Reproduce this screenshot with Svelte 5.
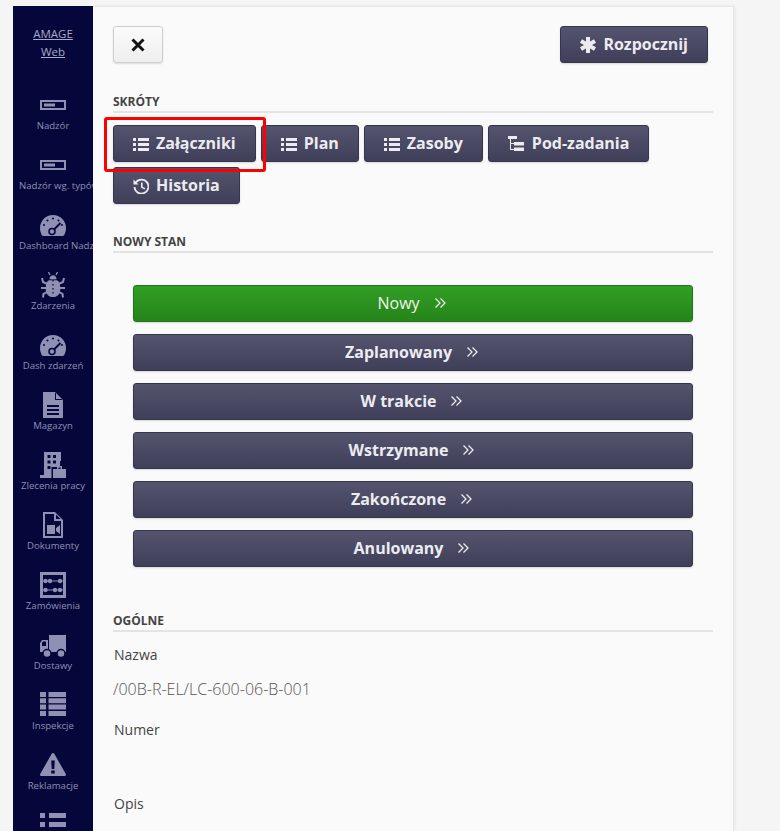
<script>
	let menu = [
		{ label: 'Nadzór', icon: drive },
		{ label: 'Nadzór wg. typów', icon: drive },
		{ label: 'Dashboard Nadzór', icon: gauge },
		{ label: 'Zdarzenia', icon: bug },
		{ label: 'Dash zdarzeń', icon: gauge },
		{ label: 'Magazyn', icon: doc },
		{ label: 'Zlecenia pracy', icon: building },
		{ label: 'Dokumenty', icon: video },
		{ label: 'Zamówienia', icon: abacus },
		{ label: 'Dostawy', icon: truck },
		{ label: 'Inspekcje', icon: table },
		{ label: 'Reklamacje', icon: warning },
		{ label: '', icon: rows }
	];

	let shortcuts = [
		{ label: 'Załączniki', icon: list, size: 16 },
		{ label: 'Plan', icon: list, size: 16 },
		{ label: 'Zasoby', icon: list, size: 16 },
		{ label: 'Pod-zadania', icon: tree, size: 17 },
		{ label: 'Historia', icon: history, size: 16 }
	];

	let states = ['Zaplanowany', 'W trakcie', 'Wstrzymane', 'Zakończone', 'Anulowany'];
</script>

{#snippet drive()}
	<path fill-rule="evenodd" d="M0 8h26v10H0zM2 10v6h22v-6zM4 11.500h11v3H4z" />
{/snippet}

{#snippet gauge()}
	<path d="M13 3C5.800 3 0 8.800 0 16c0 2.600.7 5 1.900 7.200.3.500.8.800 1.300.8h19.600c.5 0 1-.3 1.300-.8C25.300 21 26 18.600 26 16 26 8.800 20.200 3 13 3z" />
	<circle class="cut" cx="13" cy="6.500" r="1" /><circle class="cut" cx="7.500" cy="8.500" r="1" />
	<circle class="cut" cx="4" cy="13" r="1" /><circle class="cut" cx="22" cy="13" r="1" />
	<circle class="cut" cx="18.500" cy="8.500" r="1" />
	<path class="cut-line" d="M13 18.500l7.500-7.500" />
	<circle class="hub" cx="12" cy="19.500" r="3" />
{/snippet}

{#snippet bug()}
	<path d="M7 10c2-4 10-4 12 0 1.500 3 1.500 7 1 9.500-.5 3.500-3.500 5.500-7 5.500s-6.500-2-7-5.500c-.5-2.500-.5-6.500 1-9.500z" />
	<path class="line" d="M7.500 12 3 10 2 6M18.500 12l4.500-2 1-4M6 16H1M20 16h5M7 20l-3.500 2-.5 3.500M19 20l3.500 2 .5 3.500" />
	<path class="line thin" d="M10 3 8.500 0M16 3l1.500-3" />
	<path d="M9.500 7c0-5 7-5 7 0z" />
	<path class="cut" d="M12.400 8h1.200v1.600h-1.200zM12.400 12h1.200v1.600h-1.200zM12.400 16h1.200v1.600h-1.200zM12.400 20h1.200v1.600h-1.200zM6 7.600h14v.7H6z" />
{/snippet}

{#snippet doc()}
	<path fill-rule="evenodd" d="M3 0h12l8 8v18H3zM7 13v2h12v-2zM7 17v2h12v-2zM7 21v2h12v-2z" />
	<path class="cut" d="M15 0.500v7.500h7.500l-1-1H16V1.500z" />
{/snippet}

{#snippet building()}
	<path fill-rule="evenodd" d="M4 0h17v9h-1v6h-7v11H0v-3h4zM7.500 3v3h3V3zM13 3v3h3V3zM7.500 8.500v3h3v-3zM13 8.500v3h3v-3zM7.500 14v3h3v-3z" />
	<path class="cut" d="M11.500 15h14.500v11H11.500z" />
	<path fill-rule="evenodd" d="M13 17h4v-3h5v3h4v9H13zM18.500 15.500V17h2v-1.500z" />
{/snippet}

{#snippet video()}
	<path fill-rule="evenodd" d="M3 0h12l8 8v18H3zM5 2v22h16V9h-7V2zM16 2.500V7h4.500z" />
	<path d="M7 13h8v9H7zM16 16l4-3v9l-4-3z" />
{/snippet}

{#snippet abacus()}
	<path fill-rule="evenodd" d="M0 0h26v26H0zM3 3v20h20V3z" />
	<path d="M3 8.500h20v1H3zM3 17.500h20v1H3z" />
	<circle cx="5.500" cy="9" r="2.200" /><circle cx="10" cy="9" r="2.200" /><circle cx="20" cy="9" r="2.200" />
	<circle cx="5.500" cy="18" r="2.200" /><circle cx="15" cy="18" r="2.200" /><circle cx="20" cy="18" r="2.200" />
{/snippet}

{#snippet truck()}
	<path fill-rule="evenodd" d="M9 3h17v15H9zM0 11l2-3h6v10H0zM2 10.500V14h4V9.500H3z" />
	<path d="M0 18h26v2H0z" />
	<circle class="hub" cx="7" cy="21.500" r="4" />
	<circle class="hub" cx="21" cy="21.500" r="4" />
{/snippet}

{#snippet table()}
	<path d="M0 0h6v5H0zM8.500 0H26v5H8.500zM0 6.300h6v5H0zM8.500 6.300H26v5H8.500zM0 12.600h6v5H0zM8.500 12.600H26v5H8.500zM0 18.900h6v5H0zM8.500 18.900H26v5H8.500z" />
{/snippet}

{#snippet warning()}
	<path fill-rule="evenodd" d="M13 1c.6 0 1 .3 1.300.8L25.800 22c.5 1-.2 2-1.300 2H1.500C.4 24-.3 23 .2 22L11.700 1.800C12 1.300 12.400 1 13 1zM11.200 8.500l.5 8.500h2.600l.5-8.500zM11.300 18.500v3h3.400v-3z" />
{/snippet}

{#snippet rows()}
	<path d="M0 1h5v5H0zM9 1h17v5H9zM0 10h5v5H0zM9 10h17v5H9zM0 19h5v5H0zM9 19h17v5H9z" />
{/snippet}

{#snippet list()}
	<path d="M0 2h3v3H0zM5 2h11v3H5zM0 7h3v3H0zM5 7h11v3H5zM0 12h3v3H0zM5 12h11v3H5z" />
{/snippet}

{#snippet tree()}
	<path d="M0 0h9v3H0zM6 6h10v3.500H6zM6 11.500h10V15H6z" />
	<path d="M2 3h1v10h3v1H2zM3 7h3v1H3z" />
{/snippet}

{#snippet history()}
	<path class="stroke" d="M2.800 4.500A7 7 0 1 1 1.500 9" />
	<path d="M.5 1.500 5.500 6.500H.5z" />
	<path d="M8 4.500h1.600v4.200l2.700 1.600-.8 1.300L8 9.600z" />
{/snippet}

{#snippet chevrons()}
	<svg class="chevrons" viewBox="0 0 12 12" width="12" height="12">
		<path d="M1.500 1.500 6 6l-4.500 4.500M6.500 1.500 11 6l-4.500 4.500" />
	</svg>
{/snippet}

<div class="page">
	<nav class="sidebar">
		<a class="brand" href="#top">AMAGE<br />Web</a>
		{#each menu as item}
			<div class="item">
				<svg viewBox="0 0 26 26" width="26" height="26">{@render item.icon()}</svg>
				{#if item.label}
					<span>{item.label}</span>
				{/if}
			</div>
		{/each}
	</nav>

	<main class="panel">
		<div class="top">
			<button class="close" aria-label="Zamknij">
				<svg viewBox="0 0 16 16" width="16" height="16">
					<path d="M2.500 2.500l11 11M13.500 2.500l-11 11" />
				</svg>
			</button>
			<button class="btn">
				<svg class="ico" viewBox="0 0 16 16" width="16" height="16">
					<path class="stroke thick" d="M8 0v16M1 4l14 8M15 4 1 12" />
				</svg>
				Rozpocznij
			</button>
		</div>

		<h3 class="first">Skróty</h3>
		<div class="shortcuts">
			{#each shortcuts as s, i}
				<button class="btn" class:marked={i === 0}>
					<svg class="ico" viewBox="0 0 {s.size} 16" width={s.size} height="16">{@render s.icon()}</svg>
					{s.label}
				</button>
			{/each}
		</div>

		<h3 class="second">Nowy stan</h3>
		<div class="states">
			<button class="btn wide green">Nowy {@render chevrons()}</button>
			{#each states as s}
				<button class="btn wide">{s} {@render chevrons()}</button>
			{/each}
		</div>

		<h3 class="third">Ogólne</h3>
		<div class="field">Nazwa</div>
		<div class="value">/00B-R-EL/LC-600-06-B-001</div>
		<div class="field">Numer</div>
		<div class="value blank"></div>
		<div class="field">Opis</div>
	</main>
</div>

<style>
	:global(body) {
		background: #f5f5f5;
		font-family: 'Open Sans', sans-serif;
	}
	.page {
		display: flex;
		height: 825px;
		padding: 6px 0 0 13px;
		overflow: hidden;
	}
	.sidebar {
		width: 80px;
		flex: none;
		background: #05063a;
		overflow: hidden;
		color: #8f90b4;
	}
	.brand {
		display: block;
		height: 67px;
		padding-top: 19px;
		text-align: center;
		font-size: 11.500px;
		line-height: 18px;
		color: #a9a9c9;
		text-decoration: underline;
	}
	.item {
		height: 60px;
		text-align: center;
		padding: 0 6px;
		box-sizing: border-box;
	}
	.item svg {
		display: block;
		margin: 0 auto;
		fill: #8f90b4;
	}
	.item span {
		display: block;
		margin-top: 1px;
		font-size: 9.600px;
		line-height: 14px;
		white-space: nowrap;
	}
	.item :global(.cut) {
		fill: #05063a;
	}
	.item :global(.cut-line) {
		fill: none;
		stroke: #05063a;
		stroke-width: 2;
	}
	.item :global(.hub) {
		fill: #8f90b4;
		stroke: #05063a;
		stroke-width: 1.500;
	}
	.item :global(.line) {
		fill: none;
		stroke: #8f90b4;
		stroke-width: 2;
	}
	.item :global(.thin) {
		stroke-width: 1.300;
	}
	.panel {
		width: 641px;
		flex: none;
		box-sizing: border-box;
		padding: 20px 20px 0;
		background: #fafafa;
		border-right: 1px solid #e6e6e6;
		border-top: 1px solid #e6e6e6;
		box-shadow: 1px 0 3px #00000010;
		position: relative;
	}
	.top {
		display: flex;
		justify-content: space-between;
		align-items: flex-start;
		padding-right: 5px;
		margin-top: -1px;
	}
	button {
		font-family: inherit;
		cursor: pointer;
	}
	.close {
		width: 50px;
		height: 37px;
		border: 1px solid #cfcfcf;
		border-radius: 3px;
		background: linear-gradient(#fbfbfb, #eeeeee);
		box-shadow: 0 1px 2px #00000020;
		padding: 0;
		display: flex;
		align-items: center;
		justify-content: center;
	}
	.close path {
		stroke: #111;
		stroke-width: 3;
		fill: none;
	}
	.btn {
		height: 37px;
		box-sizing: border-box;
		padding: 0 19px 2px;
		display: inline-flex;
		align-items: center;
		justify-content: center;
		gap: 7px;
		border: 1px solid #35354d;
		border-radius: 3px;
		background: linear-gradient(#54546f, #3f3f5a);
		color: #ececf0;
		font-size: 16px;
		font-weight: 700;
		box-shadow: 0 1px 2px #00000025;
	}
	.ico {
		flex: none;
		fill: #ececf0;
		margin-top: 2px;
	}
	.ico :global(.stroke) {
		fill: none;
		stroke: #ececf0;
		stroke-width: 1.800;
	}
	.ico :global(.thick) {
		stroke-width: 4;
	}
	h3 {
		margin: 0;
		font-size: 12px;
		line-height: 16px;
		font-weight: 700;
		color: #444;
		text-transform: uppercase;
		border-bottom: 2px solid #e4e4e4;
		padding-bottom: 1px;
	}
	.first {
		margin-top: 31px;
	}
	.second {
		margin-top: 30px;
	}
	.third {
		margin-top: 46px;
	}
	.shortcuts {
		display: flex;
		flex-wrap: wrap;
		gap: 5px;
		margin-top: 12px;
	}
	.marked::after {
		content: '';
		position: absolute;
		left: 11px;
		top: 110px;
		width: 156px;
		height: 49px;
		border: 3px solid #f00;
		border-radius: 3px;
		pointer-events: none;
	}
	.states {
		display: flex;
		flex-direction: column;
		gap: 12px;
		margin: 32px 20px 0;
	}
	.wide {
		width: 100%;
		gap: 14px;
		padding-right: 22px;
	}
	.green {
		background: linear-gradient(#329f25, #25841a);
		border-color: #20741a;
		color: #f0f5ee;
		font-weight: 400;
	}
	.chevrons {
		fill: none;
		stroke: currentColor;
		stroke-width: 1.300;
	}
	.field {
		font-size: 14px;
		line-height: 20px;
		color: #444;
		padding-left: 1px;
		margin-top: 12px;
	}
	h3 + .field {
		margin-top: 13px;
	}
	.value {
		font-size: 16px;
		font-weight: 300;
		line-height: 22px;
		color: #555;
		margin-top: 13px;
		min-height: 22px;
		margin-bottom: 20px;
	}
	.blank {
		min-height: 21px;
	}
</style>
